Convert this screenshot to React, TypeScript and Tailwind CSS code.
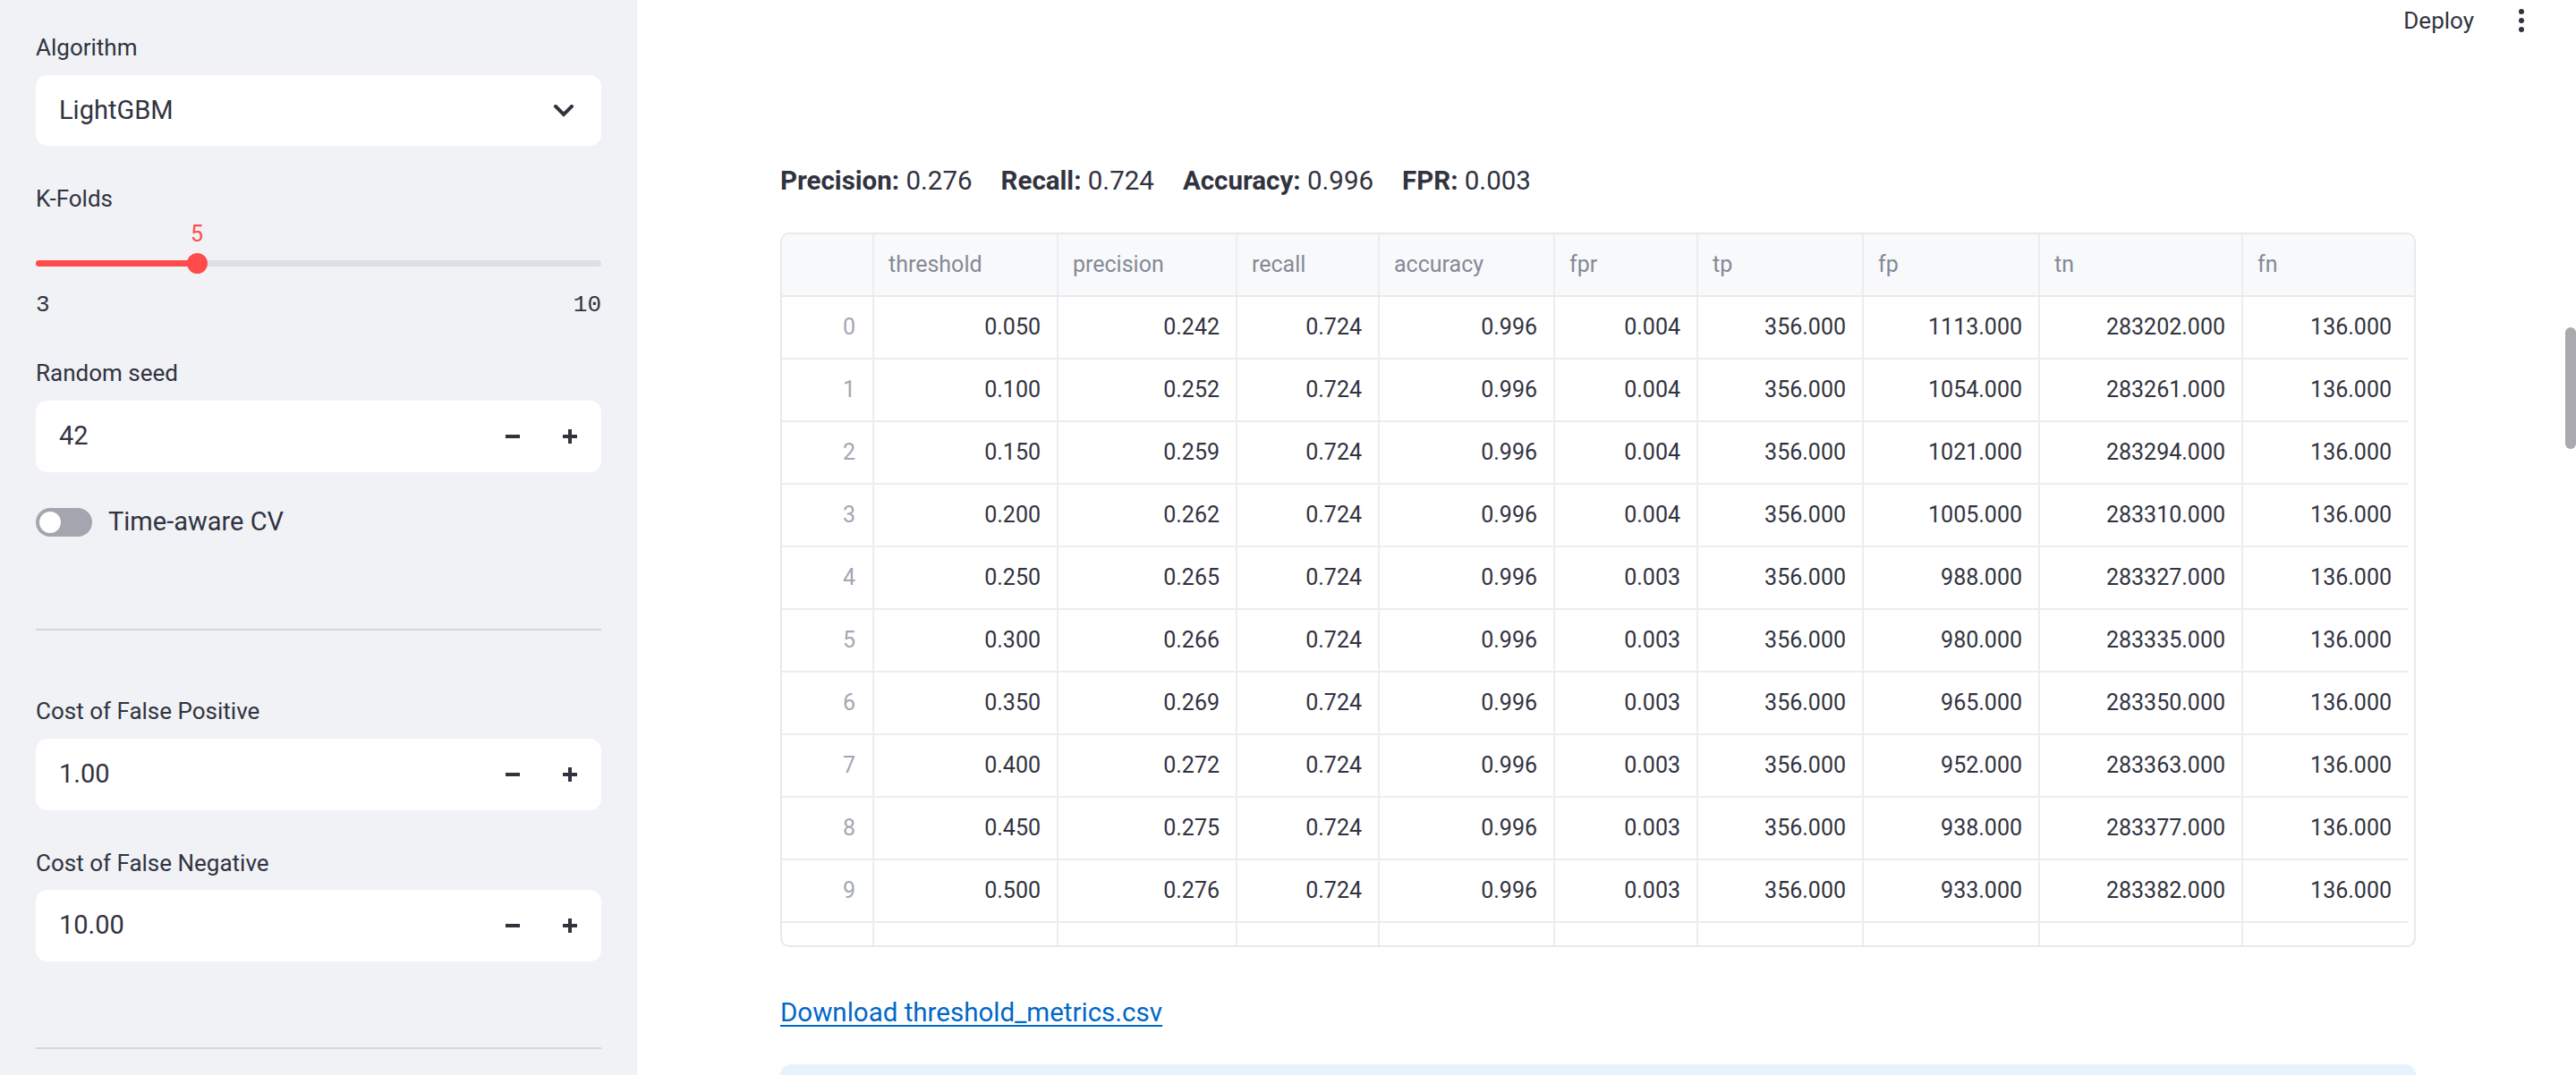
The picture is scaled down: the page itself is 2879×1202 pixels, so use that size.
const rows = [
  ['0.050', '0.242', '0.724', '0.996', '0.004', '356.000', '1113.000', '283202.000', '136.000'],
  ['0.100', '0.252', '0.724', '0.996', '0.004', '356.000', '1054.000', '283261.000', '136.000'],
  ['0.150', '0.259', '0.724', '0.996', '0.004', '356.000', '1021.000', '283294.000', '136.000'],
  ['0.200', '0.262', '0.724', '0.996', '0.004', '356.000', '1005.000', '283310.000', '136.000'],
  ['0.250', '0.265', '0.724', '0.996', '0.003', '356.000', '988.000', '283327.000', '136.000'],
  ['0.300', '0.266', '0.724', '0.996', '0.003', '356.000', '980.000', '283335.000', '136.000'],
  ['0.350', '0.269', '0.724', '0.996', '0.003', '356.000', '965.000', '283350.000', '136.000'],
  ['0.400', '0.272', '0.724', '0.996', '0.003', '356.000', '952.000', '283363.000', '136.000'],
  ['0.450', '0.275', '0.724', '0.996', '0.003', '356.000', '938.000', '283377.000', '136.000'],
  ['0.500', '0.276', '0.724', '0.996', '0.003', '356.000', '933.000', '283382.000', '136.000'],
];

const columns = ['threshold', 'precision', 'recall', 'accuracy', 'fpr', 'tp', 'fp', 'tn', 'fn'];

// column widths incl. the 2px right grid line
const widths = ['w-[103px]', 'w-[206px]', 'w-[200px]', 'w-[159px]', 'w-[196px]', 'w-[160px]', 'w-[185px]', 'w-[197px]', 'w-[227px]', 'w-[184px]'];

function Label({ children, className = '' }: { children: React.ReactNode; className?: string }) {
  return <div className={`shrink-0 h-[30px] leading-[30px] text-[26px] text-[#31333f] ${className}`}>{children}</div>;
}

function Chevron() {
  return (
    <svg width="22" height="14" viewBox="0 0 22 14" fill="none">
      <polyline points="2,2 11,11 20,2" stroke="#31333f" strokeWidth="4" strokeLinecap="square" />
    </svg>
  );
}

function NumberInput({ value, className = '' }: { value: string; className?: string }) {
  return (
    <div className={`shrink-0 h-[80px] bg-white rounded-[13px] flex items-center pl-[26px] pr-[3px] ${className}`}>
      <span className="flex-1 text-[29px] text-[#31333f]">{value}</span>
      <div className="w-[64px] h-full flex items-center justify-center">
        <div className="w-[16px] h-[4px] bg-[#31333f]" />
      </div>
      <div className="w-[64px] h-full flex items-center justify-center">
        <div className="relative w-[16px] h-[16px]">
          <div className="absolute left-0 top-[6px] w-[16px] h-[4px] bg-[#31333f]" />
          <div className="absolute left-[6px] top-0 w-[4px] h-[16px] bg-[#31333f]" />
        </div>
      </div>
    </div>
  );
}

function Sidebar() {
  return (
    <aside className="w-[712px] shrink-0 h-full bg-[#f0f2f6] px-[40px] pt-[38px] flex flex-col overflow-hidden">
      <Label>Algorithm</Label>
      <div className="shrink-0 mt-[16px] h-[79px] bg-white rounded-[13px] flex items-center justify-between pl-[26px] pr-[31px]">
        <span className="text-[29px] text-[#31333f]">LightGBM</span>
        <Chevron />
      </div>

      <Label className="mt-[44px]">K-Folds</Label>
      <div className="shrink-0 mt-[10px] h-[30px] relative">
        <span className="absolute left-[180px] -translate-x-1/2 top-0 text-[25px] leading-[30px] text-[#ff4b4b]">5</span>
      </div>
      <div className="shrink-0 mt-[5px] h-[24px] relative flex items-center">
        <div className="h-[7px] w-full rounded-full bg-[#dcdfe6] overflow-hidden flex">
          <div className="w-[180px] h-full bg-[#ff4b4b]" />
        </div>
        <div className="absolute left-[169px] top-[1px] w-[23px] h-[23px] rounded-full bg-[#ff4b4b]" />
      </div>
      <div className="shrink-0 mt-[20px] h-[30px] flex justify-between font-['Liberation_Mono',monospace] text-[26px] leading-[30px] text-[#31333f]">
        <span>3</span>
        <span>10</span>
      </div>

      <Label className="mt-[46px]">Random seed</Label>
      <NumberInput value="42" className="mt-[16px]" />

      <div className="shrink-0 mt-[40px] h-[32px] flex items-center gap-[18px]">
        <div className="w-[63px] h-[32px] rounded-full bg-[#a3a6ae] flex items-center pl-[4px]">
          <div className="w-[24px] h-[24px] rounded-full bg-white" />
        </div>
        <span className="text-[29px] text-[#31333f]">Time-aware CV</span>
      </div>

      <div className="shrink-0 mt-[103px] h-[2px] bg-[#d5d7dc]" />

      <Label className="mt-[75px]">Cost of False Positive</Label>
      <NumberInput value="1.00" className="mt-[16px] h-[79px]" />
      <Label className="mt-[44px]">Cost of False Negative</Label>
      <NumberInput value="10.00" className="mt-[15px]" />

      <div className="shrink-0 mt-[96px] h-[2px] bg-[#d5d7dc]" />
    </aside>
  );
}

function Table() {
  return (
    <div className="shrink-0 mt-[38px] w-[1828px] border-2 border-[#e8e9ec] rounded-[10px] overflow-hidden text-[25px]">
      <div className="flex h-[70px] bg-[#f8f9fb] border-b-2 border-[#e8e9ec]">
        {['', ...columns].map((c, i) => (
          <div
            key={i}
            className={`${widths[i]} h-full flex items-center pl-[16px] text-[#858996] ${i < 9 ? 'border-r-2 border-[#ecedf0]' : ''}`}
          >
            {c}
          </div>
        ))}
      </div>
      {rows.map((r, ri) => (
        <div key={ri} className="flex h-[70px] border-b-2 border-[#ecedf0] w-[1817px]">
          <div className={`${widths[0]} h-full flex items-center justify-end pr-[19px] text-[#a3a7b1] border-r-2 border-[#ecedf0]`}>
            {ri}
          </div>
          {r.map((v, ci) => (
            <div
              key={ci}
              className={`${widths[ci + 1]} h-full flex items-center justify-end pr-[18px] text-[#31333f] ${ci < 8 ? 'border-r-2 border-[#ecedf0]' : ''}`}
            >
              {v}
            </div>
          ))}
        </div>
      ))}
      <div className="flex h-[25px]">
        {widths.map((w, i) => (
          <div key={i} className={`${w} h-full ${i < 9 ? 'border-r-2 border-[#ecedf0]' : ''}`} />
        ))}
      </div>
    </div>
  );
}

export default function App() {
  return (
    <div className="flex h-[1202px] w-[2879px] overflow-hidden bg-white font-[Roboto,sans-serif]">
      <Sidebar />
      <main className="relative flex-1 flex flex-col overflow-hidden">
        <header className="shrink-0 h-[46px] flex items-center justify-end pr-[58px] gap-[50px]">
          <span className="text-[26px] text-[#31333f]">Deploy</span>
          <div className="flex flex-col gap-[4px]">
            <div className="w-[6px] h-[6px] rounded-full bg-[#31333f]" />
            <div className="w-[6px] h-[6px] rounded-full bg-[#31333f]" />
            <div className="w-[6px] h-[6px] rounded-full bg-[#31333f]" />
          </div>
        </header>

        <section className="shrink-0 pl-[160px] flex flex-col">
          <div className="shrink-0 mt-[136px] h-[40px] leading-[40px] text-[29.5px] text-[#31333f] flex gap-[32px]">
            <span><b>Precision:</b> 0.276</span>
            <span><b>Recall:</b> 0.724</span>
            <span><b>Accuracy:</b> 0.996</span>
            <span><b>FPR:</b> 0.003</span>
          </div>

          <Table />

          <div className="shrink-0 mt-[53px] h-[40px] leading-[40px] text-[29.5px]">
            <a href="#" className="text-[#0068c9] underline underline-offset-[4px]">Download threshold_metrics.csv</a>
          </div>

          <div className="shrink-0 mt-[38px] w-[1828px] h-[120px] rounded-[12px] bg-[#e8f2fc]" />
        </section>

        <div className="absolute right-0 top-[366px] w-[12px] h-[136px] rounded-full bg-[#a9a9ae]" />
      </main>
    </div>
  );
}
